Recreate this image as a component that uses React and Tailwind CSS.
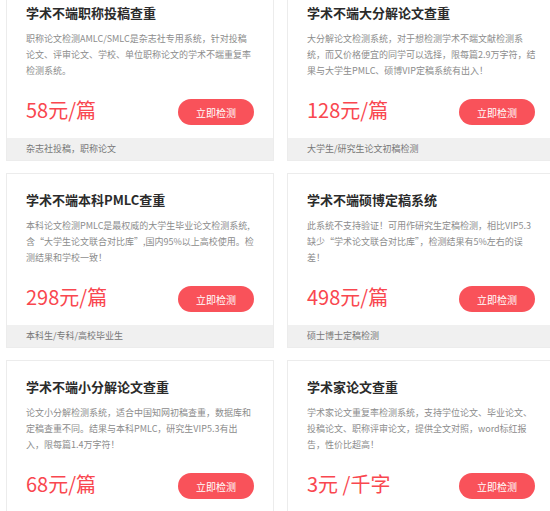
import React from "react";

const cards = [
  {
    title: "学术不端职称投稿查重",
    desc: [
      "职称论文检测AMLC/SMLC是杂志社专用系统，针对投稿",
      "论文、评审论文、学校、单位职称论文的学术不端重复率",
      "检测系统。",
    ],
    price: "58元/篇",
    tag: "杂志社投稿，职称论文",
  },
  {
    title: "学术不端大分解论文查重",
    desc: [
      "大分解论文检测系统，对于想检测学术不端文献检测系",
      "统，而又价格便宜的同学可以选择，限每篇2.9万字符，结",
      "果与大学生PMLC、硕博VIP定稿系统有出入！",
    ],
    price: "128元/篇",
    tag: "大学生/研究生论文初稿检测",
  },
  {
    title: "学术不端本科PMLC查重",
    desc: [
      "本科论文检测PMLC是最权威的大学生毕业论文检测系统,",
      "含“大学生论文联合对比库”,国内95%以上高校使用。检",
      "测结果和学校一致！",
    ],
    price: "298元/篇",
    tag: "本科生/专科/高校毕业生",
  },
  {
    title: "学术不端硕博定稿系统",
    desc: [
      "此系统不支持验证！可用作研究生定稿检测，相比VIP5.3",
      "缺少“学术论文联合对比库”，检测结果有5%左右的误",
      "差！",
    ],
    price: "498元/篇",
    tag: "硕士博士定稿检测",
  },
  {
    title: "学术不端小分解论文查重",
    desc: [
      "论文小分解检测系统，适合中国知网初稿查重，数据库和",
      "定稿查重不同。结果与本科PMLC，研究生VIP5.3有出",
      "入，限每篇1.4万字符！",
    ],
    price: "68元/篇",
    tag: "本科生初稿检测",
  },
  {
    title: "学术家论文查重",
    desc: [
      "学术家论文重复率检测系统，支持学位论文、毕业论文、",
      "投稿论文、职称评审论文，提供全文对照，word标红报",
      "告，性价比超高！",
    ],
    price: "3元 /千字",
    tag: "全文对照报告",
  },
];

function Card({ c }) {
  return (
    <div className="flex flex-col border border-[#ececec] bg-white">
      <div className="px-[19px] pt-[16px]">
        <div className="text-[13px] leading-[20px] font-bold text-[#2b2b2b] whitespace-nowrap">
          {c.title}
        </div>
        <div className="mt-[8px] h-[48px] text-[9px] leading-[16px] text-[#8c8c8c]">
          {c.desc.map((l, i) => (
            <div key={i} className="whitespace-nowrap">
              {l}
            </div>
          ))}
        </div>
        <div className="mt-[20px] mb-[13px] flex h-[26px] items-center justify-between">
          <span className="mb-[4px] text-[20px] leading-[22px] text-[#f9474f] whitespace-nowrap">
            {c.price}
          </span>
          <button className="flex h-[26px] w-[76px] items-center justify-center rounded-full bg-[#f9525a] text-[10px] text-white">
            立即检测
          </button>
        </div>
      </div>
      <div className="h-[22px] bg-[#f0f0f0] px-[19px] text-[9px] leading-[22px] text-[#777777]">
        {c.tag}
      </div>
    </div>
  );
}

export default function App() {
  return (
    <div
      className="h-[511px] w-[550px] overflow-hidden bg-white"
      style={{ fontFamily: '"Noto Sans CJK SC", "Noto Sans", sans-serif' }}
    >
      <div className="mt-[-14px] grid w-[562px] grid-cols-[268px_268px] gap-x-[13px] gap-y-[12px] pl-[6px]">
        {cards.map((c, i) => (
          <Card key={i} c={c} />
        ))}
      </div>
    </div>
  );
}
